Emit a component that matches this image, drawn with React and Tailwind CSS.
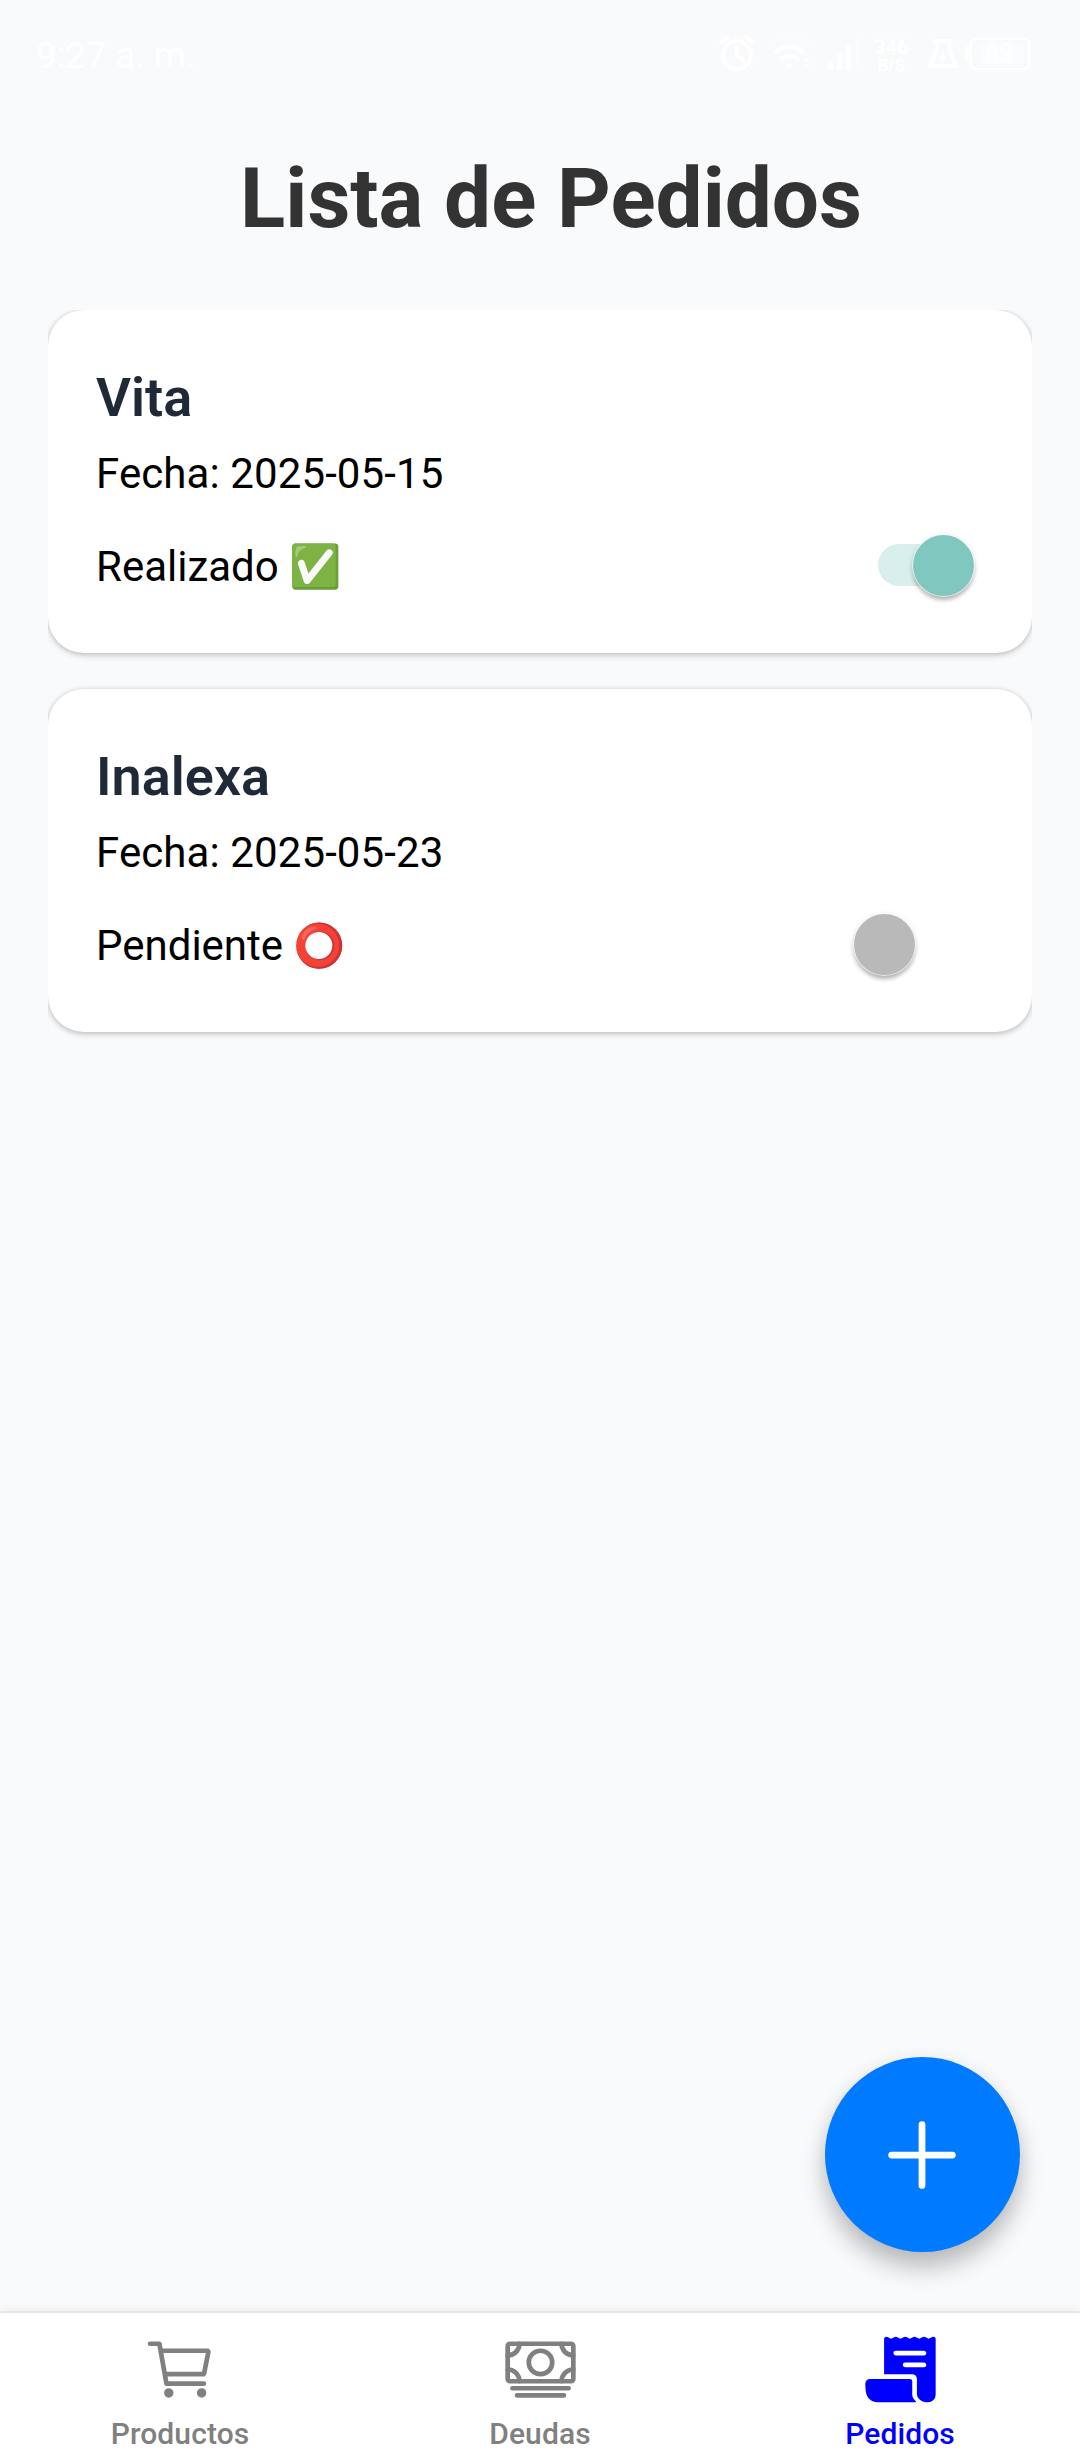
import { IoAdd, IoCartOutline, IoCashOutline, IoReceipt } from "react-icons/io5";

const orders = [
  { name: "Vita", date: "2025-05-15", done: true },
  { name: "Inalexa", date: "2025-05-23", done: false },
];

const tabs = [
  { label: "Productos", Icon: IoCartOutline, color: "text-[#808080]" },
  { label: "Deudas", Icon: IoCashOutline, color: "text-[#808080]" },
  { label: "Pedidos", Icon: IoReceipt, color: "text-[#0000ff]" },
];

function StatusBar() {
  return (
    <header className="flex h-[110px] items-start justify-between pl-[36px] pr-[50px] text-white">
      <span className="mt-[34px] text-[36.500px] leading-[44px]">9:27 a. m.</span>
      <div className="mt-[35px] flex h-[38px]">
        {/* alarm */}
        <svg className="mr-[12px] h-[38px] w-[37px]" viewBox="0 0 37 38" fill="none" stroke="currentColor" strokeWidth="4" strokeLinecap="round">
          <circle cx="18" cy="20" r="14" />
          <path d="M18 12v9l6 4M2.500 7.500l6-5M33.500 7.500l-6-5" />
        </svg>
        {/* wifi */}
        <svg className="mr-[15px] h-[38px] w-[44px]" viewBox="0 0 44 38" fill="none" stroke="currentColor" strokeWidth="4" strokeLinecap="round">
          <path opacity="0.2" d="M3 9C13-.5 30-.5 40 9" />
          <path d="M8 17c7-7.500 19-7.500 26 0M14 24c4-4 11-4 15 0" />
          <circle cx="21" cy="31" r="3" fill="currentColor" stroke="none" />
          <path d="M39 22l3 4h-6zM39 34l3-4h-6z" fill="currentColor" stroke="none" />
        </svg>
        {/* signal */}
        <svg className="mr-[15px] h-[38px] w-[33px]" viewBox="0 0 33 38" fill="currentColor">
          <rect x="1" y="26" width="5" height="9" rx="2" />
          <rect x="10" y="18" width="5" height="17" rx="2" />
          <rect x="19" y="10" width="5" height="25" rx="2" />
          <rect x="28" y="3" width="5" height="32" rx="2" opacity="0.2" />
        </svg>
        <div className="flex w-[33px] flex-col items-center pt-[3px] text-[20px] font-bold leading-[18px]">
          <span>346</span>
          <span className="text-[17px]">B/S</span>
        </div>
        {/* flask */}
        <svg className="ml-[19px] h-[38px] w-[32px]" viewBox="0 0 32 38" fill="none" stroke="currentColor" strokeWidth="4" strokeLinejoin="round" strokeLinecap="round">
          <path d="M8 6h16M10 7v7L3 31h26L22 14V7" />
          <path d="M17 17l-5 7h3l-1 5 6-7h-3z" fill="currentColor" stroke="none" />
        </svg>
        <div className="ml-[6px] mt-[11px] h-[15px] w-[4px] rounded-l-[3px] bg-white" />
        <div className="ml-[1px] mt-[3px] flex h-[32px] w-[60px] rounded-[5px] border-[2px] border-white p-[4px] pl-[8px]">
          <div className="h-[20px] w-[44px] bg-white/40 pl-[5px] text-[25px] leading-[20px]">89</div>
        </div>
      </div>
    </header>
  );
}

function Switch({ on }) {
  return (
    <div className={"relative -top-[2px] h-[42px] w-[84px] rounded-full " + (on ? "bg-[#d9efec]" : "bg-white")}>
      <div
        className={
          "absolute top-[-9px] size-[61px] rounded-full shadow-[0_0_0_1px_rgba(255,255,255,0.7),0_4px_4px_rgba(0,0,0,0.26),0_1px_6px_rgba(0,0,0,0.12)] " +
          (on ? "left-[35px] bg-[#80c7c0]" : "left-[-24px] bg-[#b9b9b9]")
        }
      />
    </div>
  );
}

function OrderCard({ order }) {
  return (
    <article className="h-[343px] rounded-[36px] bg-white px-[48px] pt-[52px] shadow-[0_2px_6px_rgba(0,0,0,0.22),0_0_4px_rgba(0,0,0,0.08)]">
      <h2 className="h-[72px] text-[54px] font-semibold leading-[72px] text-[#1f2937]">{order.name}</h2>
      <p className="mt-[15px] h-[50px] text-[42px] leading-[50px] tracking-[0.1px] text-black">Fecha: {order.date}</p>
      <div className="mt-[43px] flex h-[50px] items-center justify-between pr-[22px]">
        <span className="text-[42px] leading-[50px] text-black">
          {order.done ? "Realizado ✅" : "Pendiente ⭕"}
        </span>
        <Switch on={order.done} />
      </div>
    </article>
  );
}

export default function App() {
  return (
    <div className="relative flex h-[2459px] w-[1080px] flex-col overflow-hidden bg-[#f9fafc] font-['Roboto',sans-serif]">
      <StatusBar />
      <div className="flex h-[200px] justify-center pl-[22px] pt-[36px]">
        <h1 className="text-[83.600px] font-bold leading-[104px] text-[#333333]">Lista de Pedidos</h1>
      </div>
      <main className="mx-[48px] flex flex-1 flex-col gap-[36px] overflow-hidden">
        {orders.map((order) => (
          <OrderCard key={order.name} order={order} />
        ))}
      </main>
      <button
        aria-label="Agregar pedido"
        className="absolute bottom-[207px] right-[60px] flex size-[195px] items-center justify-center rounded-full bg-[#007bff] pr-[1px] text-white shadow-[0_16px_24px_rgba(0,0,0,0.24),0_2px_20px_rgba(0,0,0,0.06)]"
      >
        <IoAdd className="size-[108px]" />
      </button>
      <nav className="z-10 grid h-[148px] grid-cols-3 border-t-2 border-[#e6e7e8] bg-white shadow-[0_-1px_10px_rgba(0,0,0,0.05)]">
        {tabs.map(({ label, Icon, color }) => (
          <a key={label} className={"flex flex-col items-center pt-[19px] " + color}>
            <Icon className="size-[75px]" />
            <span className="mt-[10px] text-[30px] font-medium leading-[34px] tracking-[0.1px]">{label}</span>
          </a>
        ))}
      </nav>
    </div>
  );
}
